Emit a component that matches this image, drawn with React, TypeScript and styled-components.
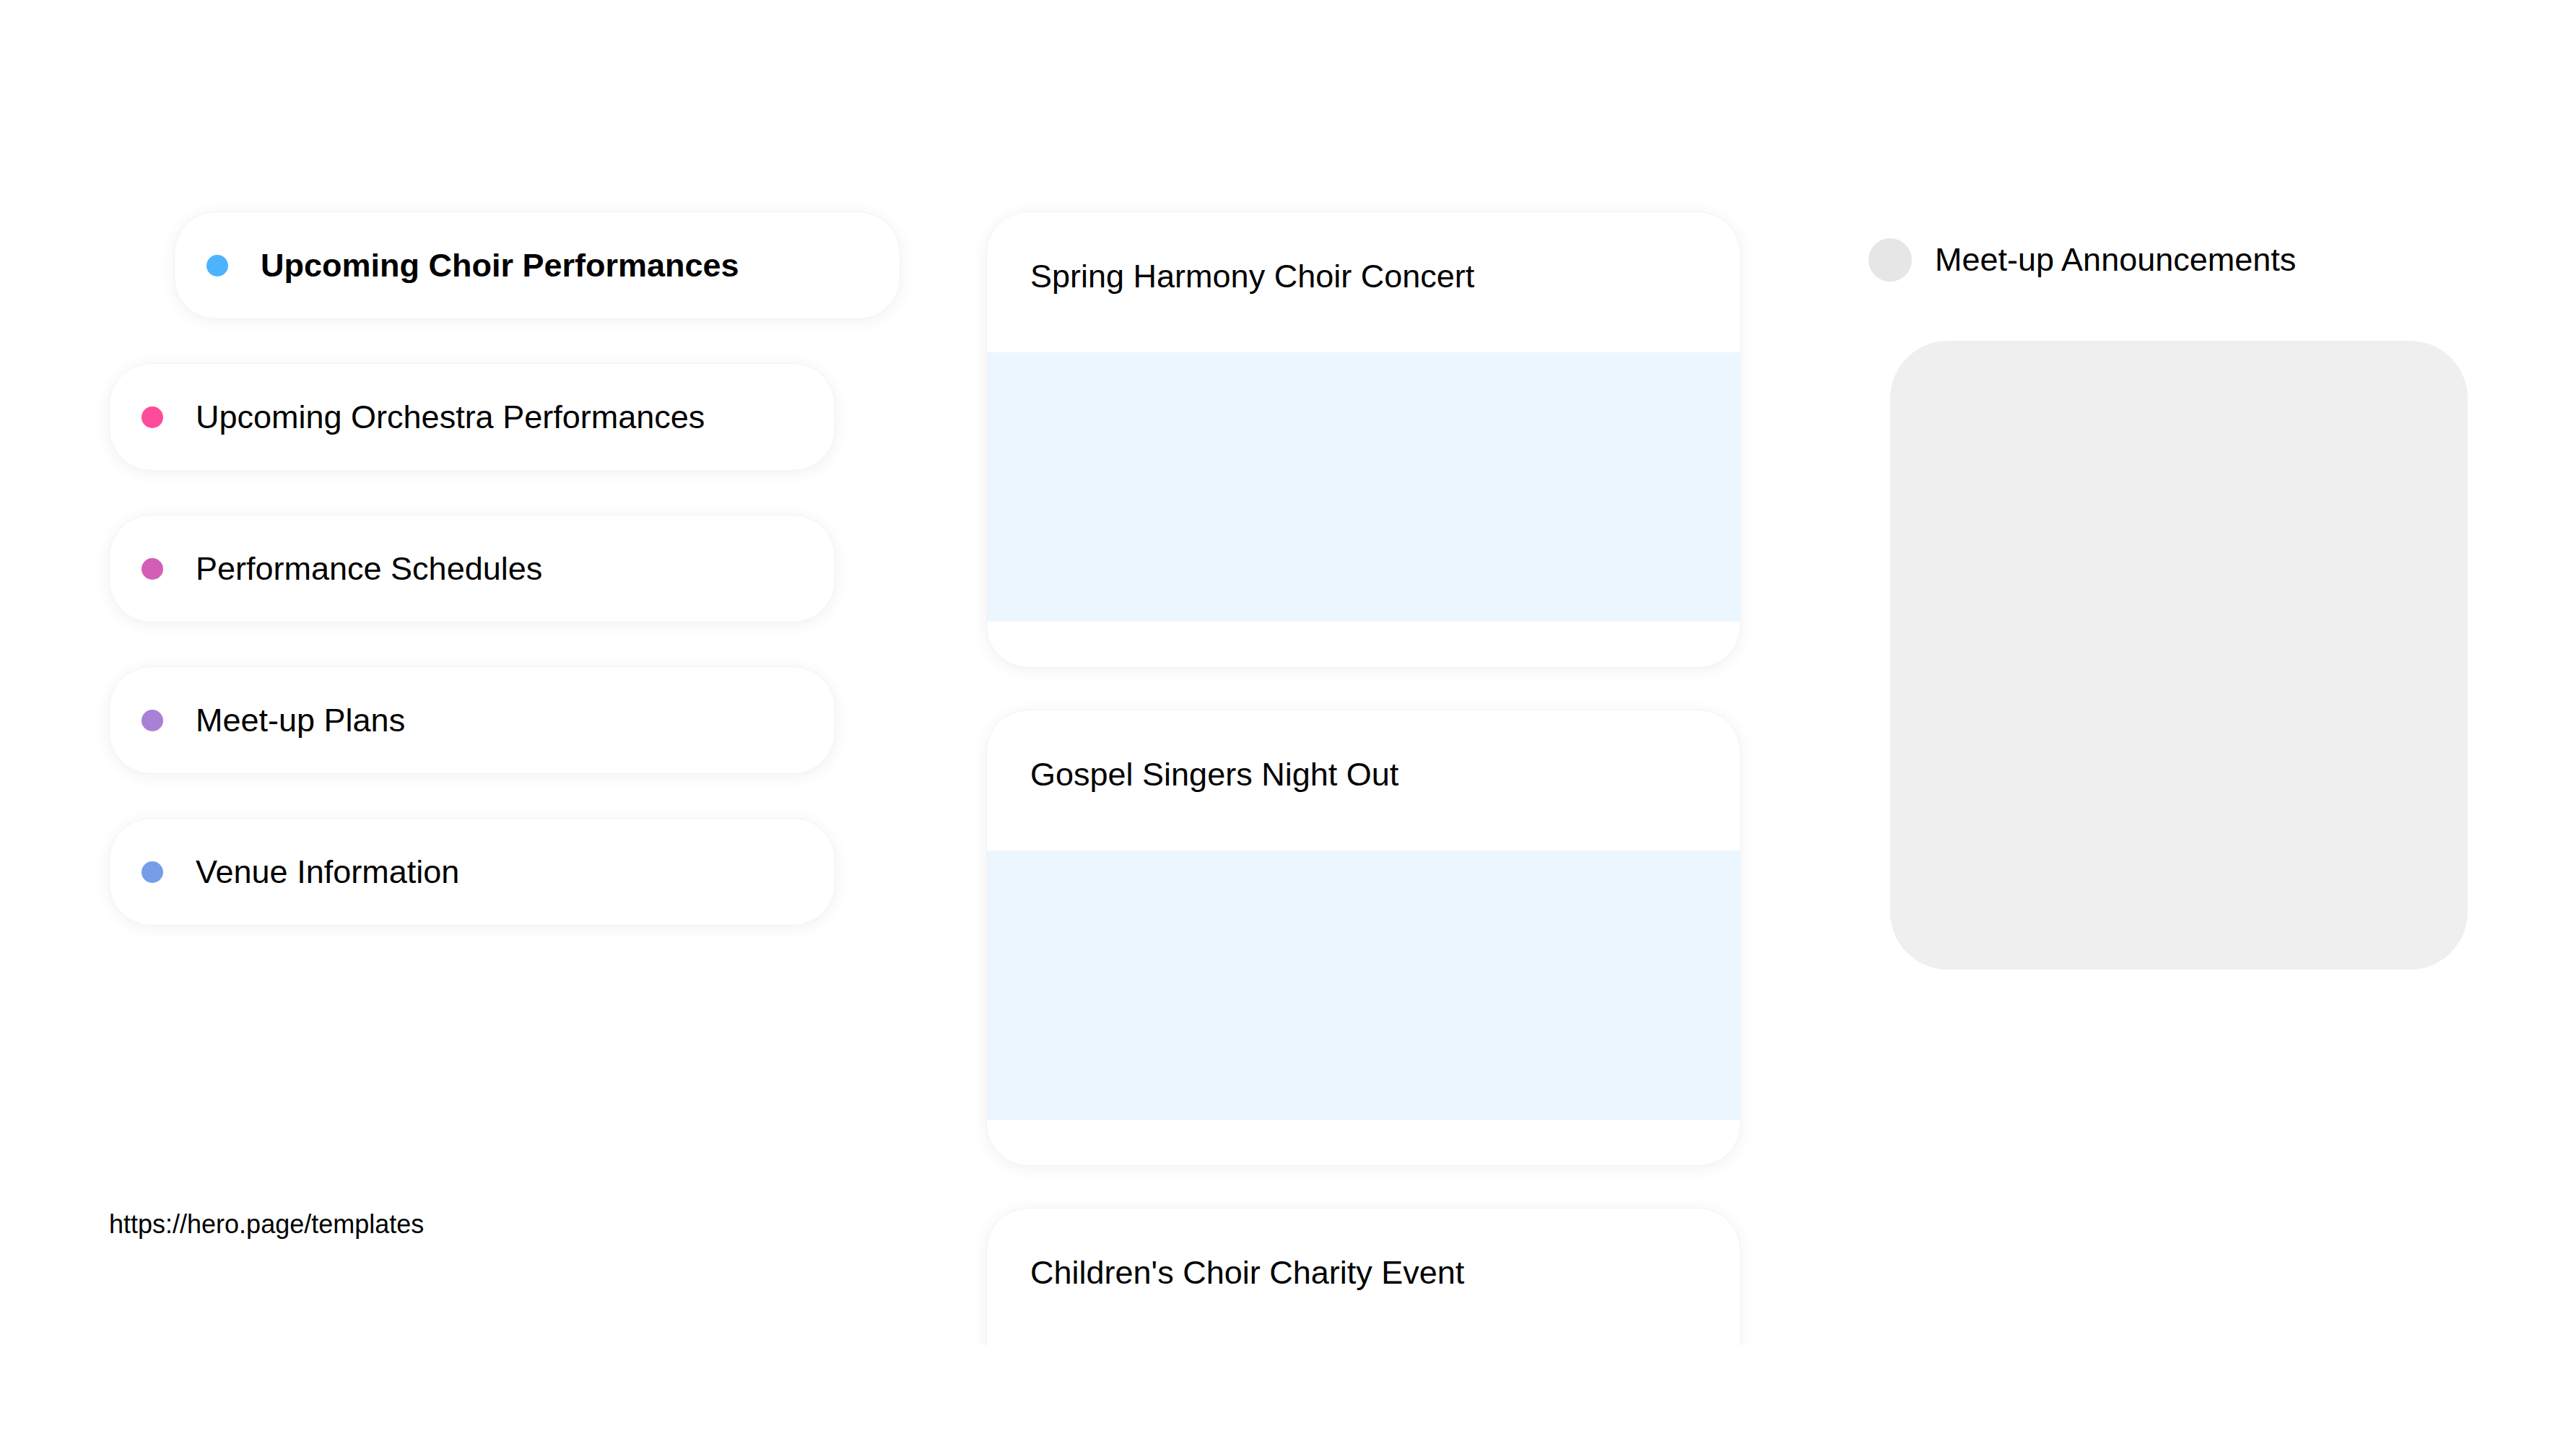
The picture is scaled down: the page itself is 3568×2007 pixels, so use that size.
import React from 'react'
import styled, { createGlobalStyle } from 'styled-components'

const GlobalStyle = createGlobalStyle`
  html, body {
    margin: 0;
    padding: 0;
    background: #ffffff;
  }
  body {
    font-family: 'Liberation Sans', Arial, Helvetica, sans-serif;
    color: #000;
  }
`

const Page = styled.div`
  width: 3568px;
  height: 2007px;
  box-sizing: border-box;
  padding: 293px 0 0 151px;
  display: grid;
  grid-template-columns: 1006px 1045px 840px;
  column-gap: 209px;
  align-items: start;
  overflow: hidden;
`

const LeftColumn = styled.div`
  display: flex;
  flex-direction: column;
  align-items: flex-start;
`

const TopicList = styled.div`
  display: flex;
  flex-direction: column;
  gap: 61px;
`

const Topic = styled.div<{ $active?: boolean }>`
  width: 1006px;
  height: 149px;
  box-sizing: border-box;
  margin-left: ${p => (p.$active ? '90px' : '0')};
  padding: 0 44px;
  display: flex;
  align-items: center;
  gap: 45px;
  background: #fff;
  border-radius: 58px;
  border: 1px solid #f3f3f3;
  box-shadow: 0 3px 22px rgba(0, 0, 0, 0.06);
`

const Dot = styled.span<{ $color: string }>`
  width: 30px;
  height: 30px;
  border-radius: 50%;
  flex: none;
  background: ${p => p.$color};
`

const TopicLabel = styled.span<{ $active?: boolean }>`
  font-size: 45px;
  font-weight: ${p => (p.$active ? 700 : 400)};
  white-space: nowrap;
`

const SourceLink = styled.div`
  margin-top: 393px;
  font-size: 36px;
  white-space: nowrap;
`

const FeedClip = styled.div`
  box-sizing: border-box;
  height: 1600px;
  margin: -30px -40px 0;
  padding: 30px 40px 0;
  overflow: hidden;
`

const Feed = styled.div`
  display: flex;
  flex-direction: column;
  gap: 58px;
`

const EventCard = styled.div`
  height: 630px;
  flex: none;
  display: flex;
  flex-direction: column;
  background: #fff;
  border-radius: 58px;
  border: 1px solid #f3f3f3;
  box-shadow: 0 3px 22px rgba(0, 0, 0, 0.06);
  overflow: hidden;
`

const EventTitle = styled.div`
  height: 194px;
  flex: none;
  box-sizing: border-box;
  padding: 63px 0 0 60px;
  font-size: 45px;
  line-height: 1.15;
  white-space: nowrap;
`

const EventMedia = styled.div`
  height: 373px;
  flex: none;
  background: #ecf6fe;
`

const Aside = styled.div`
  display: flex;
  flex-direction: column;
  margin-left: -32px;
  padding-top: 37px;
`

const AsideHeader = styled.div`
  display: flex;
  align-items: center;
  gap: 32px;
`

const AsideAvatar = styled.span`
  width: 60px;
  height: 60px;
  border-radius: 50%;
  background: #e6e6e6;
  flex: none;
`

const AsideTitle = styled.span`
  font-size: 45px;
  white-space: nowrap;
`

const AsidePanel = styled.div`
  margin: 82px 0 0 30px;
  width: 800px;
  height: 871px;
  border-radius: 80px;
  background: #efefef;
`

const topics = [
  { label: 'Upcoming Choir Performances', color: '#4db3ff', active: true },
  { label: 'Upcoming Orchestra Performances', color: '#ff4b9b' },
  { label: 'Performance Schedules', color: '#d25fb5' },
  { label: 'Meet-up Plans', color: '#a880d6' },
  { label: 'Venue Information', color: '#789de8' },
]

const events = [
  'Spring Harmony Choir Concert',
  'Gospel Singers Night Out',
  "Children's Choir Charity Event",
]

export default function App() {
  return (
    <>
      <GlobalStyle />
      <Page>
        <LeftColumn>
          <TopicList>
            {topics.map(t => (
              <Topic key={t.label} $active={t.active}>
                <Dot $color={t.color} />
                <TopicLabel $active={t.active}>{t.label}</TopicLabel>
              </Topic>
            ))}
          </TopicList>
          <SourceLink>https://hero.page/templates</SourceLink>
        </LeftColumn>

        <FeedClip>
          <Feed>
            {events.map(title => (
              <EventCard key={title}>
                <EventTitle>{title}</EventTitle>
                <EventMedia />
              </EventCard>
            ))}
          </Feed>
        </FeedClip>

        <Aside>
          <AsideHeader>
            <AsideAvatar />
            <AsideTitle>Meet-up Announcements</AsideTitle>
          </AsideHeader>
          <AsidePanel />
        </Aside>
      </Page>
    </>
  )
}
